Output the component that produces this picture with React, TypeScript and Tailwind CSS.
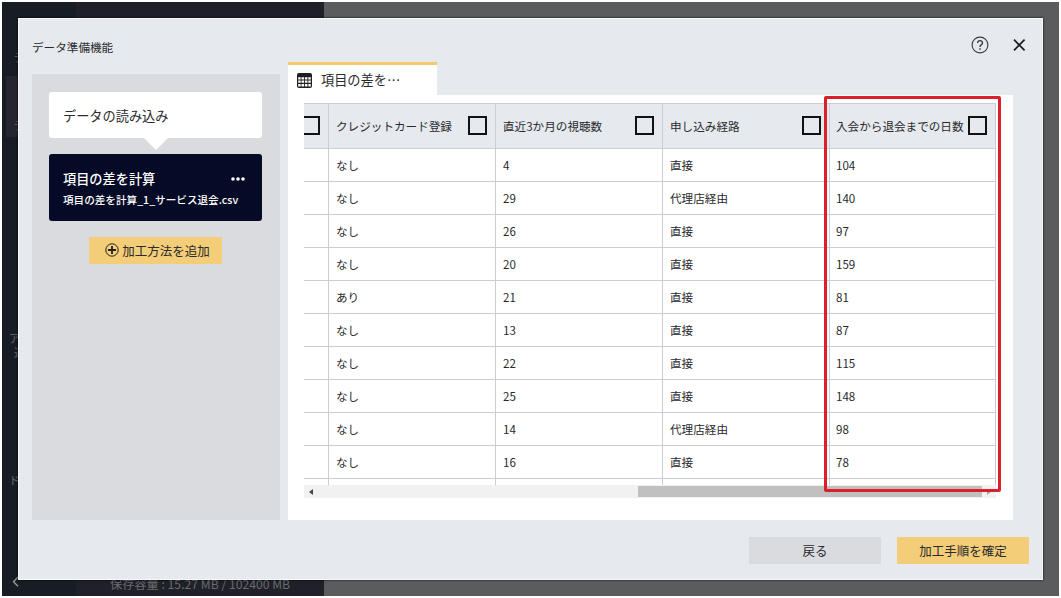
import React from 'react';

const rows = [
  ['なし', '4', '直接', '104'],
  ['なし', '29', '代理店経由', '140'],
  ['なし', '26', '直接', '97'],
  ['なし', '20', '直接', '159'],
  ['あり', '21', '直接', '81'],
  ['なし', '13', '直接', '87'],
  ['なし', '22', '直接', '115'],
  ['なし', '25', '直接', '148'],
  ['なし', '14', '代理店経由', '98'],
  ['なし', '16', '直接', '78'],
  ['', '', '', ''],
];

const headers = ['クレジットカード登録', '直近3か月の視聴数', '申し込み経路', '入会から退会までの日数'];

function CheckBox() {
  return <span className="mb-px block h-[19px] w-[19px] shrink-0 border-2 border-[#111214]" />;
}

function Backdrop() {
  return (
    <div className="flex h-full w-full bg-[#5b5c5e] text-[#6a6b70]">
      <div className="flex h-full w-[74px] shrink-0 flex-col overflow-hidden bg-[#181c23] text-[11px] leading-[14px]">
        <div className="h-[74px] pl-[12px] pt-[48px]">デ</div>
        <div className="ml-1 h-[61px] bg-[#26262e] pl-[8px] pt-[42px]">デ</div>
        <div className="h-[334px] pl-[7px] pt-[194px]">
          <div>ア</div>
          <div className="pl-[5px]">連</div>
        </div>
        <div className="h-[104px] pl-[7px] pt-[2px]">ド</div>
        <svg className="ml-[9px] h-[14px] w-[10px]" viewBox="0 0 10 14" fill="none" stroke="#9b9ca0" strokeWidth="1.3">
          <path d="M7 2 2.500 6.800l4.500 4.500" />
        </svg>
      </div>
      <div className="flex h-full w-[248px] shrink-0 items-end bg-[#202028] pl-[34px]">
        <span className="mb-[3px] whitespace-nowrap text-[12.2px] leading-[18px]">保存容量 : 15.27 MB / 102400 MB</span>
      </div>
    </div>
  );
}

function StepsPanel() {
  return (
    <aside className="flex h-[446px] w-[248px] shrink-0 flex-col items-center bg-[#dadbdf] pr-px pt-[18px]">
      <div className="flex h-[46px] w-[213px] items-center rounded-[3px] bg-white pl-[14px] pt-px text-[13.2px]">データの読み込み</div>
      <svg className="h-[12px] w-[24px]" viewBox="0 0 24 12">
        <path d="M0 0h24L12 12z" fill="#fff" />
      </svg>
      <div className="mt-[4px] h-[67px] w-[213px] rounded-[3px] bg-[#050a26] pl-[14px] pr-[17px] pt-[14px] font-medium text-white">
        <div className="flex h-[21px] items-center justify-between text-[13.2px]">
          <span>項目の差を計算</span>
          <svg className="h-[4px] w-[14px]" viewBox="0 0 14 4" fill="#fff">
            <circle cx="2" cy="2" r="1.8" />
            <circle cx="7" cy="2" r="1.8" />
            <circle cx="12" cy="2" r="1.8" />
          </svg>
        </div>
        <div className="mt-px whitespace-nowrap text-[10.6px] leading-[20px]">項目の差を計算_1_サービス退会.csv</div>
      </div>
      <button className="mt-[16px] flex h-[27px] w-[133px] items-center justify-center gap-[3px] bg-[#f3cd78] pl-[4px] pt-px text-[12.5px]">
        <svg className="mb-[2px] h-[14px] w-[14px]" viewBox="0 0 14 14" fill="none" stroke="#222">
          <circle cx="7" cy="7" r="6.2" strokeWidth="1" />
          <path d="M7 3v8M3 7h8" strokeWidth="1.8" />
        </svg>
        加工方法を追加
      </button>
    </aside>
  );
}

function DataTable() {
  return (
    <div className="w-[692px]">
      <div className="h-[382px] overflow-hidden border-t border-[#cbcdd3] text-[11.6px]">
        <div className="flex h-[45px] border-b border-[#cbcdd3] bg-[#e6e9ee]">
          <div className="flex w-[25px] shrink-0 items-center justify-end overflow-hidden border-r border-[#cbcdd3] pr-[8px]">
            <CheckBox />
          </div>
          {headers.map((h) => (
            <div key={h} className="flex w-[167px] shrink-0 items-center justify-between whitespace-nowrap border-r border-[#cbcdd3] pl-[7px] pr-[8px] last:w-[166px] last:pl-[6px]">
              <span className="pt-px">{h}</span>
              <CheckBox />
            </div>
          ))}
        </div>
        {rows.map((row, i) => (
          <div key={i} className="flex h-[33px] border-b border-[#cbcdd3]">
            <div className="w-[25px] shrink-0 border-r border-[#cbcdd3]" />
            {row.map((cell, j) => (
              <div key={j} className="flex w-[167px] shrink-0 items-center border-r border-[#cbcdd3] pl-[7px] pt-px last:w-[166px] last:pl-[6px]">
                {cell}
              </div>
            ))}
          </div>
        ))}
      </div>
      <div className="flex h-[13px] items-center justify-between bg-[#f1f1f1] pl-[5px] pr-[5px]">
        <svg className="h-[6px] w-[4px]" viewBox="0 0 4 6">
          <path d="M4 0v6L0 3z" fill="#454545" />
        </svg>
        <div className="ml-auto mr-[5px] h-[11px] w-[344px] bg-[#c0c0c0]" />
        <svg className="h-[6px] w-[4px]" viewBox="0 0 4 6">
          <path d="M0 0v6l4-3z" fill="#a5a5a5" />
        </svg>
      </div>
    </div>
  );
}

export default function App() {
  return (
    <div
      className="relative h-[598px] w-[1061px] overflow-hidden bg-white p-[2px] text-[#292a2d]"
      style={{ fontFamily: '"Noto Sans CJK JP", "Noto Sans", sans-serif' }}
    >
      <Backdrop />
      <main className="absolute left-[18px] top-[18px] flex h-[562px] w-[1025px] flex-col border border-[#f7f8fa] bg-[#e6e9ee] shadow-[0_0_2px_#000]">
        <div className="flex h-[43px] shrink-0 justify-between pl-[13px] pr-[16px]">
          <h1 className="pt-[19px] text-[11.6px] leading-[18px]">データ準備機能</h1>
          <div className="flex gap-[23px] pt-[17px]">
            <svg className="h-[18px] w-[18px]" viewBox="0 0 18 18" fill="none" stroke="#3b3c3f">
              <circle cx="9" cy="9" r="7.9" strokeWidth="1.1" />
              <path d="M6.7 6.9a2.400 2.200 0 1 1 3.700 1.800C9.500 9.300 9 9.700 9 11" strokeWidth="1.4" />
              <path d="M9 12.200v1.600" strokeWidth="1.5" />
            </svg>
            <svg className="mt-[2px] h-[14px] w-[14px]" viewBox="0 0 14 14" stroke="#1c1d1f" strokeWidth="1.7">
              <path d="m2 1.700 10.600 10.600M12.600 1.700 2 12.300" />
            </svg>
          </div>
        </div>
        <div className="flex h-[458px] shrink-0 items-end gap-[8px] pl-[13px]">
          <StepsPanel />
          <section className="flex h-full w-[725px] flex-col">
            <div className="flex h-[33px] w-[149px] shrink-0 items-center gap-[9px] border-t-[3px] border-[#f3ca6c] bg-white pl-[9px] text-[13.2px]">
              <svg className="h-[15px] w-[15px]" viewBox="0 0 15 15">
                <rect width="15" height="15" rx="2" fill="#1d1e20" />
                <path
                  d="M1.200 4.200h2.500v2.300H1.200zM4.500 4.200h2.500v2.300H4.500zM7.900 4.200h2.500v2.300H7.900zM11.300 4.200h2.500v2.300h-2.500zM1.200 7.500h2.500v2.300H1.200zM4.500 7.500h2.500v2.300H4.500zM7.900 7.500h2.500v2.300H7.900zM11.300 7.500h2.500v2.300h-2.500zM1.200 10.900h2.500v2.700H1.200zM4.500 10.900h2.500v2.700H4.500zM7.900 10.900h2.500v2.700H7.900zM11.300 10.900h2.500v2.700h-2.500z"
                  fill="#fff"
                />
              </svg>
              <span>項目の差を…</span>
            </div>
            <div className="flex-1 bg-white pl-[16px] pt-[8px]">
              <DataTable />
            </div>
          </section>
        </div>
        <footer className="flex justify-end gap-[16px] pr-[13px] pt-[17px] text-[12.5px]">
          <button className="h-[27px] w-[132px] rounded-[1px] bg-[#dadbdf] pt-px">戻る</button>
          <button className="h-[27px] w-[132px] rounded-[1px] bg-[#f3cd78] pt-px">加工手順を確定</button>
        </footer>
      </main>
      <div className="pointer-events-none absolute left-[824px] top-[96px] h-[396px] w-[177px] rounded-[2px] border-[3px] border-[#db1f2b]" />
    </div>
  );
}
